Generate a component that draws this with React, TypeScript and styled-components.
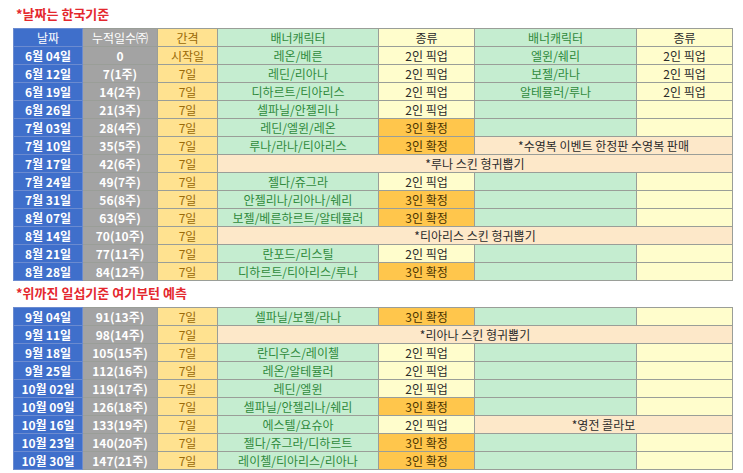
import React from "react";
import styled, { createGlobalStyle } from "styled-components";

const GlobalStyle = createGlobalStyle`
  html, body {
    margin: 0;
    padding: 0;
    background: #ffffff;
  }
  body {
    font-family: "Noto Sans CJK KR", "Noto Sans", sans-serif;
  }
`;

type Kind = "date" | "count" | "gap" | "banner" | "pick" | "sure" | "event";

type Cell = { kind: Kind; text?: string; span?: number };

type Row = {
  date: string;
  count: string;
  gap: string;
  cells: Cell[];
};

const banner = (text = ""): Cell => ({ kind: "banner", text });
const type = (text = ""): Cell =>
  text.startsWith("3") ? { kind: "sure", text } : { kind: "pick", text };
const event = (text: string, span: number): Cell => ({ kind: "event", text, span });

const firstRows: Row[] = [
  { date: "6월 04일", count: "0", gap: "시작일", cells: [banner("레온/베른"), type("2인 픽업"), banner("엘윈/쉐리"), type("2인 픽업")] },
  { date: "6월 12일", count: "7(1주)", gap: "7일", cells: [banner("레딘/리아나"), type("2인 픽업"), banner("보젤/라나"), type("2인 픽업")] },
  { date: "6월 19일", count: "14(2주)", gap: "7일", cells: [banner("디하르트/티아리스"), type("2인 픽업"), banner("알테뮬러/루나"), type("2인 픽업")] },
  { date: "6월 26일", count: "21(3주)", gap: "7일", cells: [banner("셀파닐/안젤리나"), type("2인 픽업"), banner(), type()] },
  { date: "7월 03일", count: "28(4주)", gap: "7일", cells: [banner("레딘/엘윈/레온"), type("3인 확정"), banner(), type()] },
  { date: "7월 10일", count: "35(5주)", gap: "7일", cells: [banner("루나/라나/티아리스"), type("3인 확정"), event("*수영복 이벤트 한정판 수영복 판매", 2)] },
  { date: "7월 17일", count: "42(6주)", gap: "7일", cells: [event("*루나 스킨 형귀뽑기", 4)] },
  { date: "7월 24일", count: "49(7주)", gap: "7일", cells: [banner("젤다/쥬그라"), type("2인 픽업"), banner(), type()] },
  { date: "7월 31일", count: "56(8주)", gap: "7일", cells: [banner("안젤리나/리아나/쉐리"), type("3인 확정"), banner(), type()] },
  { date: "8월 07일", count: "63(9주)", gap: "7일", cells: [banner("보젤/베른하르트/알테뮬러"), type("3인 확정"), banner(), type()] },
  { date: "8월 14일", count: "70(10주)", gap: "7일", cells: [event("*티아리스 스킨 형귀뽑기", 4)] },
  { date: "8월 21일", count: "77(11주)", gap: "7일", cells: [banner("란포드/리스틸"), type("2인 픽업"), banner(), type()] },
  { date: "8월 28일", count: "84(12주)", gap: "7일", cells: [banner("디하르트/티아리스/루나"), type("3인 확정"), banner(), type()] },
];

const secondRows: Row[] = [
  { date: "9월 04일", count: "91(13주)", gap: "7일", cells: [banner("셀파닐/보젤/라나"), type("3인 확정"), banner(), type()] },
  { date: "9월 11일", count: "98(14주)", gap: "7일", cells: [event("*리아나 스킨 형귀뽑기", 4)] },
  { date: "9월 18일", count: "105(15주)", gap: "7일", cells: [banner("란디우스/레이첼"), type("2인 픽업"), banner(), type()] },
  { date: "9월 25일", count: "112(16주)", gap: "7일", cells: [banner("레온/알테뮬러"), type("2인 픽업"), banner(), type()] },
  { date: "10월 02일", count: "119(17주)", gap: "7일", cells: [banner("레딘/엘윈"), type("2인 픽업"), banner(), type()] },
  { date: "10월 09일", count: "126(18주)", gap: "7일", cells: [banner("셀파닐/안젤리나/쉐리"), type("3인 확정"), banner(), type()] },
  { date: "10월 16일", count: "133(19주)", gap: "7일", cells: [banner("에스텔/요슈아"), type("2인 픽업"), event("*영전 콜라보", 2)] },
  { date: "10월 23일", count: "140(20주)", gap: "7일", cells: [banner("젤다/쥬그라/디하르트"), type("3인 확정"), banner(), type()] },
  { date: "10월 30일", count: "147(21주)", gap: "7일", cells: [banner("레이첼/티아리스/리아나"), type("3인 확정"), banner(), type()] },
];

const palette: Record<Kind, { bg: string; fg: string; weight: number }> = {
  date: { bg: "#3f6fcb", fg: "#ffffff", weight: 700 },
  count: { bg: "#a3a3a3", fg: "#ffffff", weight: 700 },
  gap: { bg: "#ffe290", fg: "#9a6a08", weight: 400 },
  banner: { bg: "#c5edd0", fg: "#2f8a3c", weight: 400 },
  pick: { bg: "#fffdcc", fg: "#2b2b2b", weight: 400 },
  sure: { bg: "#ffc64c", fg: "#4a3300", weight: 400 },
  event: { bg: "#fde8c9", fg: "#2b2b2b", weight: 400 },
};

const Page = styled.div`
  padding: 6px 0 0 13px;
  width: 730px;
`;

const Note = styled.div`
  color: #e4282e;
  font-size: 13px;
  font-weight: 700;
  line-height: 16px;
  padding-left: 3px;
  height: 22px;
`;

const SecondNote = styled(Note)`
  padding-top: 1px;
`;

const Sheet = styled.table`
  border-collapse: collapse;
  table-layout: fixed;
  width: 719px;
  margin-bottom: 3px;
`;

const Column = styled.col<{ $w: number }>`
  width: ${(p) => p.$w}px;
`;

const Cell = styled.td<{ $kind: Kind; $head?: boolean }>`
  height: 17px;
  padding: 0;
  border: 1px solid ${(p) => (p.$kind === "date" ? "#6b8bd0" : "#9a9e98")};
  background: ${(p) => palette[p.$kind].bg};
  color: ${(p) => palette[p.$kind].fg};
  font-weight: ${(p) => (p.$head ? 400 : palette[p.$kind].weight)};
  font-size: 12px;
  line-height: 16px;
  text-align: center;
  white-space: nowrap;
  overflow: hidden;
`;

const widths = [69, 75, 60, 161, 96, 162, 96];

const Columns = () => (
  <colgroup>
    {widths.map((w, i) => (
      <Column key={i} $w={w} />
    ))}
  </colgroup>
);

const Header = () => (
  <tr>
    <Cell as="th" $head $kind="date">날짜</Cell>
    <Cell as="th" $head $kind="count">누적일수㈜</Cell>
    <Cell as="th" $head $kind="gap">간격</Cell>
    <Cell as="th" $head $kind="banner">배너캐릭터</Cell>
    <Cell as="th" $head $kind="pick">종류</Cell>
    <Cell as="th" $head $kind="banner">배너캐릭터</Cell>
    <Cell as="th" $head $kind="pick">종류</Cell>
  </tr>
);

const Rows = ({ rows }: { rows: Row[] }) => (
  <>
    {rows.map((r) => (
      <tr key={r.date}>
        <Cell $kind="date">{r.date}</Cell>
        <Cell $kind="count">{r.count}</Cell>
        <Cell $kind="gap">{r.gap}</Cell>
        {r.cells.map((c, i) => (
          <Cell key={i} $kind={c.kind} colSpan={c.span}>
            {c.text}
          </Cell>
        ))}
      </tr>
    ))}
  </>
);

export default function App() {
  return (
    <>
      <GlobalStyle />
      <Page>
        <Note>*날짜는 한국기준</Note>
        <Sheet>
          <Columns />
          <tbody>
            <Header />
            <Rows rows={firstRows} />
          </tbody>
        </Sheet>
        <SecondNote>*위까진 일섭기준 여기부턴 예측</SecondNote>
        <Sheet>
          <Columns />
          <tbody>
            <Rows rows={secondRows} />
          </tbody>
        </Sheet>
      </Page>
    </>
  );
}
